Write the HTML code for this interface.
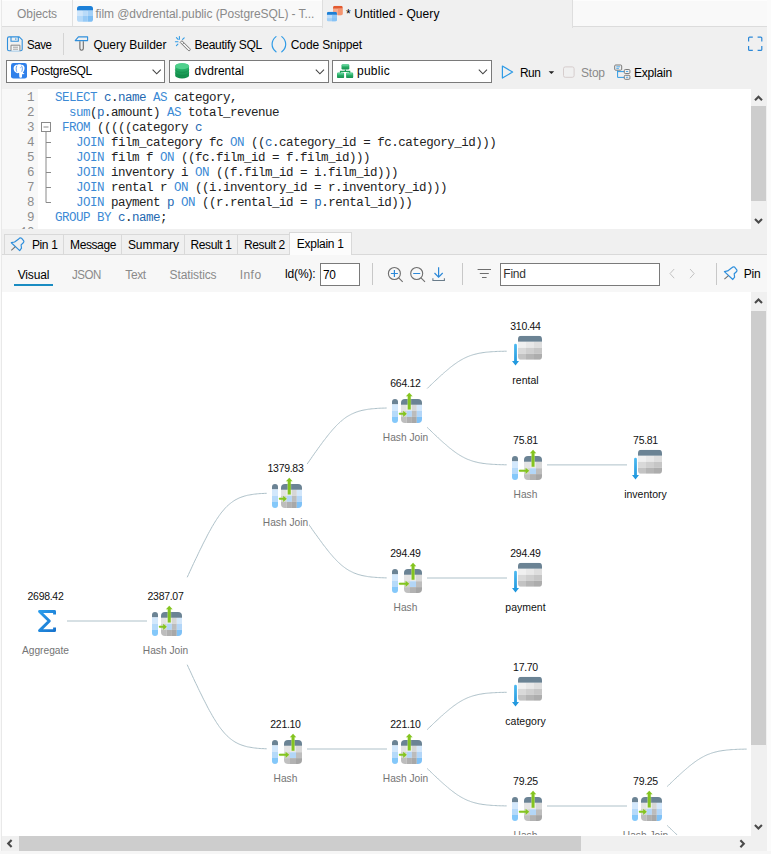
<!DOCTYPE html>
<html><head><meta charset="utf-8"><title>Navicat</title>
<style>
*{box-sizing:border-box;margin:0;padding:0}
html,body{width:771px;height:854px;overflow:hidden;background:#f0f0f0}
body{font-family:"Liberation Sans",sans-serif;font-size:12px;color:#000;position:relative}
.a{position:absolute}
.t{position:absolute;white-space:nowrap;height:16px;line-height:16px;font-size:12px}
.g{color:#8a8a8a}
.sep{position:absolute;width:1px;background:#d4d4d4}
.combo{position:absolute;top:60px;height:23px;background:#fff;border:1px solid #7a7a7a}
svg{position:absolute;overflow:visible}
/* editor */
#ed{left:2px;top:89px;width:749px;height:140px;background:#fff;overflow:hidden}
#gut{left:0;top:0;width:36px;height:140px;background:#f8f8f8}
.ln{position:absolute;left:0;width:32px;text-align:right;font-family:"Liberation Mono",monospace;font-size:12.5px;letter-spacing:-0.5px;color:#8c8c8c;height:15px;line-height:15px}
.cl{position:absolute;left:53px;font-family:"Liberation Mono",monospace;font-size:12.5px;letter-spacing:-0.5px;color:#222;height:15px;line-height:15px;white-space:pre}
.k{color:#3c8ad5}
.i{color:#2569b1}
/* canvas */
#cv{left:2px;top:292px;width:749px;height:544px;background:#fff;overflow:hidden}
#cvc{position:absolute;left:0;top:0;width:749px;height:542.7px;overflow:hidden}
#cvi{position:absolute;left:-2px;top:-292px;width:771px;height:854px}
#edges path{fill:none;stroke:#aec1c9;stroke-width:1}
.num{position:absolute;width:80px;text-align:center;font-size:10.5px;letter-spacing:-0.3px;height:14px;line-height:14px;color:#111}
.lbl{position:absolute;width:80px;text-align:center;font-size:10.2px;height:14px;line-height:14px;color:#747474}
.lbl.tb{color:#111;font-size:10.5px}
.num span,.lbl span{background:#fff;padding:0 1px}
.ic{position:absolute}
.sb{position:absolute;background:#f0f0f0}
.th{position:absolute;background:#cdcdcd}
</style></head><body>
<!-- window edges -->
<div class="a" style="left:0;top:0;width:2px;height:854px;background:#fafafa"></div><div class="a" style="left:1px;top:0;width:1px;height:854px;background:#e9e9e9"></div>
<div class="a" style="left:767px;top:0;width:4px;height:854px;background:#fbfbfb"></div>
<!-- tab bar -->
<div class="a" style="left:2px;top:0;width:765px;height:27px;background:#f9f9f9;border-bottom:1px solid #dcdcdc;border-top:1px solid #fdfdfd"></div>
<div class="a" style="left:322px;top:0;width:251px;height:28px;background:#f0f0f0;border-left:1px solid #dedede;border-right:1px solid #dedede"></div>
<div class="sep" style="left:72px;top:0;height:26px;background:#e0e0e0"></div>
<!--TABICONS-->
<!-- toolbar separators -->
<div class="sep" style="left:63px;top:33px;height:22px"></div>
<!-- combos -->
<div class="combo" style="left:6px;width:159px"></div>
<div class="combo" style="left:169px;width:159.5px"></div>
<div class="combo" style="left:332px;width:159.5px"></div>
<!-- editor -->
<div id="ed" class="a"><div id="gut" class="a"></div>
<div class="ln" style="top:1.9px">1</div><div class="cl" style="top:1.9px"><span class="k">SELECT</span> <span class="i">c</span>.<span class="i">name</span> <span class="k">AS</span> category,</div>
<div class="ln" style="top:16.9px">2</div><div class="cl" style="top:16.9px">  <span class="k">sum</span>(<span class="i">p</span>.amount) <span class="k">AS</span> total_revenue</div>
<div class="ln" style="top:31.9px">3</div><div class="cl" style="top:31.9px"> <span class="k">FROM</span> (((((category <span class="i">c</span></div>
<div class="ln" style="top:46.9px">4</div><div class="cl" style="top:46.9px">   <span class="k">JOIN</span> film_category fc <span class="k">ON</span> ((<span class="i">c</span>.category_id = fc.category_id)))</div>
<div class="ln" style="top:61.9px">5</div><div class="cl" style="top:61.9px">   <span class="k">JOIN</span> film f <span class="k">ON</span> ((fc.film_id = f.film_id)))</div>
<div class="ln" style="top:76.9px">6</div><div class="cl" style="top:76.9px">   <span class="k">JOIN</span> inventory i <span class="k">ON</span> ((f.film_id = i.film_id)))</div>
<div class="ln" style="top:91.9px">7</div><div class="cl" style="top:91.9px">   <span class="k">JOIN</span> rental r <span class="k">ON</span> ((i.inventory_id = r.inventory_id)))</div>
<div class="ln" style="top:106.9px">8</div><div class="cl" style="top:106.9px">   <span class="k">JOIN</span> payment <span class="i">p</span> <span class="k">ON</span> ((r.rental_id = <span class="i">p</span>.rental_id)))</div>
<div class="ln" style="top:121.9px">9</div><div class="cl" style="top:121.9px"><span class="k">GROUP BY</span> <span class="i">c</span>.<span class="i">name</span>;</div>
<div class="ln" style="top:136.9px">10</div><div class="cl" style="top:136.9px"></div><svg width="60" height="140" style="left:0;top:0"><g fill="none" stroke="#8a8a8a" stroke-width="1">
<rect x="39.5" y="33.5" width="9" height="9" fill="#fff"/><path d="M41.5,38h5"/>
<path d="M44,43v70.5h5M44,53.500h5M44,68.500h5M44,83.500h5M44,98.500h5"/></g></svg>
</div>
<!-- editor scrollbar -->
<div class="sb" style="left:751px;top:89px;width:16px;height:140px"></div>
<div class="th" style="left:751px;top:106px;width:15px;height:95px"></div>
<!-- result tabs -->
<div class="a" style="left:2px;top:255px;width:765px;height:37px;background:#f7f7f7"></div>
<div class="a" style="left:2px;top:254px;width:765px;height:1px;background:#d9d9d9"></div>
<div class="a" style="left:4px;top:234px;width:60px;height:21px;border:1px solid #d9d9d9;background:#f0f0f0"></div>
<div class="a" style="left:63px;top:234px;width:59px;height:21px;border:1px solid #d9d9d9;background:#f0f0f0"></div>
<div class="a" style="left:121px;top:234px;width:64px;height:21px;border:1px solid #d9d9d9;background:#f0f0f0"></div>
<div class="a" style="left:184px;top:234px;width:54px;height:21px;border:1px solid #d9d9d9;background:#f0f0f0"></div>
<div class="a" style="left:237px;top:234px;width:53px;height:21px;border:1px solid #d9d9d9;background:#f0f0f0"></div>
<div class="a" style="left:289px;top:232px;width:63px;height:23px;border:1px solid #d9d9d9;border-bottom:none;background:#fcfcfc"></div>
<div class="a" style="left:14px;top:284px;width:39px;height:2px;background:#1a8cc2"></div>
<div class="a" style="left:320px;top:263px;width:40px;height:23px;background:#fff;border:1px solid #7a7a7a"></div>
<div class="a" style="left:500px;top:263px;width:160px;height:23px;background:#fff;border:1px solid #7a7a7a"></div>
<div class="sep" style="left:372px;top:263px;height:22px;background:#c8c8c8"></div>
<div class="sep" style="left:462px;top:263px;height:22px;background:#c8c8c8"></div>
<div class="sep" style="left:716px;top:263px;height:22px;background:#c8c8c8"></div>
<div class="t" style="left:17.1px;top:5.5px;color:#8a8a8a;letter-spacing:-0.11px">Objects</div>
<div class="t" style="left:95.5px;top:5.5px;color:#8a8a8a;letter-spacing:-0.06px">film @dvdrental.public (PostgreSQL) - T...</div>
<div class="t" style="left:346.0px;top:5.5px;color:#000;letter-spacing:0.08px">* Untitled - Query</div>
<div class="t" style="left:26.7px;top:37.0px;color:#000;letter-spacing:-0.45px;transform:scaleX(0.955);transform-origin:0 50%">Save</div>
<div class="t" style="left:93.4px;top:37.0px;color:#000;letter-spacing:-0.02px">Query Builder</div>
<div class="t" style="left:194.5px;top:37.0px;color:#000;letter-spacing:-0.27px">Beautify SQL</div>
<div class="t" style="left:290.8px;top:37.0px;color:#000;letter-spacing:-0.12px">Code Snippet</div>
<div class="t" style="left:30.5px;top:62.9px;color:#000;letter-spacing:-0.41px">PostgreSQL</div>
<div class="t" style="left:194.5px;top:62.9px;color:#000;letter-spacing:0.02px">dvdrental</div>
<div class="t" style="left:357.0px;top:62.9px;color:#000;letter-spacing:0.26px">public</div>
<div class="t" style="left:520.4px;top:65.2px;color:#000;letter-spacing:-0.45px;transform:scaleX(0.987);transform-origin:0 50%">Run</div>
<div class="t" style="left:581.1px;top:65.2px;color:#8a8a8a;letter-spacing:-0.25px">Stop</div>
<div class="t" style="left:634.0px;top:65.2px;color:#000;letter-spacing:-0.21px">Explain</div>
<div class="t" style="left:31.9px;top:237.2px;color:#000;letter-spacing:-0.35px">Pin 1</div>
<div class="t" style="left:70.1px;top:237.2px;color:#000;letter-spacing:-0.41px">Message</div>
<div class="t" style="left:127.9px;top:237.2px;color:#000;letter-spacing:-0.03px">Summary</div>
<div class="t" style="left:190.5px;top:237.2px;color:#000;letter-spacing:-0.37px">Result 1</div>
<div class="t" style="left:244.1px;top:237.2px;color:#000;letter-spacing:-0.42px">Result 2</div>
<div class="t" style="left:296.8px;top:236.0px;color:#000;letter-spacing:-0.28px">Explain 1</div>
<div class="t" style="left:17.7px;top:266.9px;color:#000;letter-spacing:-0.16px">Visual</div>
<div class="t" style="left:72.1px;top:266.9px;color:#8a8a8a;letter-spacing:-0.45px;transform:scaleX(0.960);transform-origin:0 50%">JSON</div>
<div class="t" style="left:125.3px;top:266.9px;color:#8a8a8a;letter-spacing:-0.38px">Text</div>
<div class="t" style="left:169.5px;top:266.9px;color:#8a8a8a;letter-spacing:-0.10px">Statistics</div>
<div class="t" style="left:239.7px;top:266.9px;color:#8a8a8a;letter-spacing:0.45px">Info</div>
<div class="t" style="left:285.1px;top:265.7px;color:#000;letter-spacing:-0.16px">ld(%):</div>
<div class="t" style="left:323.2px;top:266.9px;color:#000;letter-spacing:-0.45px;transform:scaleX(0.987);transform-origin:0 50%">70</div>
<div class="t" style="left:503.3px;top:266.4px;color:#333;letter-spacing:-0.21px">Find</div>
<div class="t" style="left:743.8px;top:265.9px;color:#000;letter-spacing:-0.28px">Pin</div>
<svg id="ci" width="771" height="854" viewBox="0 0 771 854" style="left:0;top:0">
<defs>
<linearGradient id="gcy" x1="0" y1="0" x2="0" y2="1"><stop offset="0" stop-color="#35c278"/><stop offset="1" stop-color="#0f8a47"/></linearGradient>
<linearGradient id="gsc" x1="0" y1="0" x2="0" y2="1"><stop offset="0" stop-color="#3cc47c"/><stop offset="1" stop-color="#16924f"/></linearGradient>
</defs>
<!-- film tab icon -->
<g>
<clipPath id="cf1"><rect x="77" y="5.900" width="16" height="15.900" rx="2.600"/></clipPath>
<g clip-path="url(#cf1)">
<rect x="77" y="6" width="16" height="4.6" fill="#1c80d8"/>
<rect x="77" y="10.6" width="5.4" height="5.4" fill="#cfe6fb"/><rect x="82.4" y="10.6" width="5.3" height="5.4" fill="#b9dbf9"/><rect x="87.7" y="10.6" width="5.3" height="5.4" fill="#a3d0f7"/>
<rect x="77" y="16" width="5.4" height="6" fill="#b4d9f9"/><rect x="82.4" y="16" width="5.3" height="6" fill="#97caf6"/><rect x="87.7" y="16" width="5.3" height="6" fill="#7dbdf3"/>
</g></g>
<!-- query tab icon -->
<g>
<clipPath id="cq1"><rect x="333" y="5.8" width="9.8" height="9.6" rx="1.8"/></clipPath>
<g clip-path="url(#cq1)"><rect x="333" y="5.8" width="9.8" height="3" fill="#e35a2f"/><rect x="333" y="8.8" width="9.8" height="6.6" fill="#f7ab8d"/><rect x="338" y="8.8" width="4.8" height="6.6" fill="#f4946f"/></g>
<clipPath id="cq2"><rect x="326.8" y="11.7" width="10.2" height="9.8" rx="1.8"/></clipPath>
<g clip-path="url(#cq2)"><rect x="326.8" y="11.7" width="10.2" height="3.2" fill="#1c7fd6"/><rect x="326.8" y="14.9" width="10.2" height="6.6" fill="#bfdefa"/><rect x="332" y="14.9" width="5" height="6.6" fill="#8fc6f6"/><rect x="326.8" y="18.2" width="10.2" height="3.3" fill="#7dbdf3" opacity=".45"/></g>
</g>
<!-- save -->
<g fill="none" stroke="#2f8fdc" stroke-width="1.1" stroke-linejoin="round">
<path d="M9,36.9h10.2l3,3v9.4a1.5,1.5 0 0 1 -1.5,1.5h-11.7a1.5,1.5 0 0 1 -1.5,-1.5v-10.9a1.5,1.5 0 0 1 1.5,-1.5z"/>
<path d="M11,36.9v4.3h7.3v-4.3"/>
</g>
<g fill="none" stroke="#7c7c7c" stroke-width=".9">
<path d="M11,50.800v-5.600h8.900v5.600" fill="#f6f6f6"/><path d="M13,47.200h5M13,49.200h5" stroke-width=".7"/>
<path d="M15.8,38.2v1.8" stroke="#2f8fdc"/>
</g>
<!-- query builder -->
<path d="M75.2,40.6l3.2,-3.7h9.2v3.7z" fill="none" stroke="#2f8fdc" stroke-width="1.1" stroke-linejoin="round"/>
<path d="M79.9,41.2v7.3a1.7,1.7 0 0 0 3.4,0v-7.3" fill="none" stroke="#6a6a6a" stroke-width="1.1"/>
<!-- beautify -->
<g stroke="#2f9be6" stroke-width="1.1" stroke-linecap="round" fill="none">
<path d="M179.4,36.6v2.6M175.4,41.7h2.6M176.4,37.7l1.7,1.7M184.2,37.8l-1.6,1.6M177.9,44.1l-1.5,1.5"/>
</g>
<path d="M180.2,42.4l1.7,-1.7l8,8a1.2,1.2 0 0 1 -1.7,1.7z" fill="none" stroke="#777" stroke-width="1"/>
<path d="M182.4,44.4l1.6,-1.6" stroke="#777" stroke-width=".9"/>
<!-- code snippet -->
<path d="M276,36.6c-5.2,4.2 -5.2,11 0,15.2M281.8,36.6c5.2,4.2 5.2,11 0,15.2" fill="none" stroke="#2f9be6" stroke-width="1.2" stroke-linecap="round"/>
<!-- fullscreen -->
<path d="M748.6,41.5v-3.4a1,1 0 0 1 1,-1h3.2M757.6,37.1h3.2a1,1 0 0 1 1,1v3.4M761.8,46v3.4a1,1 0 0 1 -1,1h-3.2M752.8,50.4h-3.2a1,1 0 0 1 -1,-1v-3.4" fill="none" stroke="#2b88d8" stroke-width="1.2"/>
<!-- pg icon -->
<rect x="11" y="63" width="16" height="15.600" rx="2.400" fill="#2f80ea"/>
<path d="M13.700,69.300c-.5,-3.200 1.700,-4.900 4,-4.600c1.100,-.5 2.400,-.5 3.500,0c2.300,-.2 3.800,1.700 3.300,4.300c-.2,1.300 -.8,2.600 -1.600,3.500c.2,.7 .8,.9 1.500,.7c-.3,.9 -1.500,1.300 -2.300,.8l-.1,2.700c-.1,1.500 -2.600,1.500 -2.700,0l-.2,-3.900c-1,.7 -2.500,.6 -3.100,-.3c-1.200,-.5 -2.100,-1.700 -2.300,-3.200z" fill="#fff"/>
<path d="M16.900,65.700c-1,1.700 -.9,4.300 -.1,6M21.400,65.700c1.100,1.500 1.300,3.900 .3,6" fill="none" stroke="#2f80ea" stroke-width=".75"/>
<circle cx="20.300" cy="67.800" r=".45" fill="#2f80ea"/>
<!-- cylinder -->
<path d="M175.2,66.200a6.900,3 0 0 1 13.800,0v9.300a6.900,3 0 0 1 -13.800,0z" fill="url(#gcy)"/>
<ellipse cx="182.1" cy="66.200" rx="6.900" ry="3" fill="#4fd08c"/>
<path d="M175.2,69.400a6.900,3 0 0 0 13.800,0M175.2,72.500a6.900,3 0 0 0 13.800,0" fill="none" stroke="#0d7d40" stroke-width=".7" opacity=".55"/>
<!-- schema -->
<g fill="url(#gsc)">
<rect x="341.500" y="64.3" width="7.800" height="5.200" rx="1.200"/>
<rect x="337" y="72.600" width="7.100" height="5.500" rx="1.200"/>
<rect x="346.100" y="72.600" width="7.100" height="5.500" rx="1.200"/>
</g>
<g fill="#63d49c" opacity=".8"><rect x="342.100" y="64.700" width="6.600" height="1.500" rx=".6"/><rect x="337.600" y="73" width="5.900" height="1.500" rx=".6"/><rect x="346.700" y="73" width="5.900" height="1.500" rx=".6"/></g>
<path d="M345.400,69.500v1.800M340.500,72.800v-1.500h9.200v1.500" fill="none" stroke="#1e9e58" stroke-width="1.200"/>
<!-- combo chevrons -->
<g fill="none" stroke="#444" stroke-width="1.100">
<path d="M152.600,69.700l4.100,4.100l4.100,-4.100"/>
<path d="M315.800,69.700l4.100,4.100l4.100,-4.100"/>
<path d="M478.800,69.700l4.100,4.100l4.100,-4.100"/>
</g>
<!-- run -->
<path d="M502.400,66.100v12l10.200,-6z" fill="none" stroke="#2f9be6" stroke-width="1.200" stroke-linejoin="round"/>
<path d="M548.600,71.200h5.600l-2.800,2.900z" fill="#222"/>
<!-- stop -->
<rect x="563.500" y="66.900" width="10.600" height="10.400" rx="1.800" fill="none" stroke="#d6cdcd" stroke-width="1"/>
<!-- explain -->
<rect x="614.700" y="65" width="7" height="5.200" rx="1" fill="none" stroke="#7a7a7a" stroke-width="1"/>
<path d="M616.300,66.800h3.800M616.300,68.400h2.600" stroke="#2f9be6" stroke-width=".8"/>
<path d="M617.600,70.400v7h6.400M617.600,71.600h6.400" fill="none" stroke="#2f9be6" stroke-width="1"/>
<rect x="624.300" y="69.500" width="5.600" height="4" rx="1" fill="none" stroke="#7a7a7a" stroke-width="1"/>
<rect x="624.300" y="75.300" width="5.600" height="4" rx="1" fill="none" stroke="#7a7a7a" stroke-width="1"/>
<path d="M626,71.500h2.200M626,77.300h2.200" stroke="#2f9be6" stroke-width=".8"/>
<!-- pin icons -->
<g><path d="M731.800,267.800q1.400,-1.500 2.800,-.7l2.200,2.700q.6,1 -.4,1.900l-2.200,2.100l.4,3.300l-1.800,2.400l-8.400,-7.900l3.300,-.7z" fill="none" stroke="#2f8fdc" stroke-width="1.200" stroke-linejoin="round"/>
<path d="M728.400,275.600l-4,3.600" stroke="#707070" stroke-width="1.100"/></g>
<g transform="translate(-713.100,-28.900)"><path d="M731.800,267.800q1.400,-1.500 2.800,-.7l2.200,2.700q.6,1 -.4,1.900l-2.200,2.100l.4,3.300l-1.800,2.400l-8.400,-7.900l3.300,-.7z" fill="none" stroke="#2f8fdc" stroke-width="1.200" stroke-linejoin="round"/>
<path d="M728.400,275.600l-4,3.600" stroke="#707070" stroke-width="1.100"/></g>
<!-- zoom icons -->
<g fill="none" stroke="#6e6e6e" stroke-width="1.1">
<circle cx="394.4" cy="273.5" r="6"/><path d="M398.700,277.900l4,3.900"/>
<circle cx="416.700" cy="273.500" r="6"/><path d="M421,277.900l4,3.900"/>
</g>
<path d="M390.900,273.500h7M394.400,270v7M413.200,273.500h7" stroke="#2b88d8" stroke-width="1.200"/>
<path d="M438.600,267.300v9.600M434.500,273l4.100,4.100l4.100,-4.100" fill="none" stroke="#2b88d8" stroke-width="1.200"/>
<path d="M432.900,278.300v2.200h11.500v-2.200" fill="none" stroke="#6a7c8a" stroke-width="1.100"/>
<!-- filter -->
<path d="M477.600,269.500h13.400M479.800,273.500h9M482,277.500h4.600" stroke="#6e6e6e" stroke-width="1"/>
<!-- nav arrows -->
<path d="M674.200,269l-4.200,4.600l4.200,4.600M690,269l4.200,4.600l-4.200,4.600" fill="none" stroke="#c2c2c2" stroke-width="1"/>
</svg>

<!-- canvas -->
<div id="cv" class="a"><div id="cvc"><div id="cvi">
<svg id="edges" width="771" height="854" style="left:0;top:0">
<path d="M67.0,621.0L147.0,621.0"/>
<path d="M187.2,577.3L188.5,574.5L189.8,571.6L191.1,568.9L192.3,566.2L193.5,563.6L194.7,561.1L195.9,558.6L197.1,556.2L198.2,553.8L199.3,551.5L200.4,549.2L201.5,547.1L202.5,544.9L203.5,542.9L204.6,540.8L205.6,538.9L206.6,537.0L207.5,535.1L208.5,533.3L209.4,531.6L210.4,529.9L211.3,528.2L212.2,526.6L213.1,525.1L214.0,523.6L214.9,522.1L215.8,520.7L216.6,519.4L217.5,518.1L218.4,516.8L219.2,515.6L220.1,514.4L220.9,513.2L221.8,512.1L222.7,511.1L223.5,510.1L224.4,509.1L225.2,508.1L226.1,507.2L226.9,506.4L227.8,505.5L228.7,504.8L229.6,504.0L230.5,503.3L231.4,502.6L232.3,501.9L233.2,501.3L234.1,500.7L235.0,500.1L236.0,499.6L236.9,499.1L237.9,498.6L238.9,498.1L239.9,497.7L240.9,497.3L242.0,496.9L243.0,496.6L244.1,496.2L245.2,495.9L246.3,495.6L247.4,495.3L248.6,495.1L249.8,494.9L251.0,494.7L252.2,494.5L253.4,494.3L254.7,494.1L256.0,494.0L257.4,493.8L258.7,493.7L260.1,493.6L261.5,493.5L263.0,493.5L264.5,493.4L266.0,493.3L266.7,493.3"/>
<path d="M187.2,664.7L188.5,667.6L189.8,670.4L191.1,673.1L192.3,675.8L193.5,678.4L194.7,681.0L195.9,683.5L197.1,685.9L198.2,688.3L199.3,690.6L200.4,692.8L201.5,695.0L202.5,697.1L203.5,699.2L204.6,701.2L205.6,703.2L206.6,705.1L207.5,707.0L208.5,708.8L209.4,710.5L210.4,712.2L211.3,713.8L212.2,715.4L213.1,717.0L214.0,718.5L214.9,719.9L215.8,721.4L216.6,722.7L217.5,724.0L218.4,725.3L219.2,726.5L220.1,727.7L220.9,728.8L221.8,729.9L222.7,731.0L223.5,732.0L224.4,733.0L225.2,733.9L226.1,734.8L226.9,735.7L227.8,736.5L228.7,737.3L229.6,738.1L230.5,738.8L231.4,739.5L232.3,740.2L233.2,740.8L234.1,741.4L235.0,742.0L236.0,742.5L236.9,743.0L237.9,743.5L238.9,744.0L239.9,744.4L240.9,744.8L242.0,745.2L243.0,745.5L244.1,745.9L245.2,746.2L246.3,746.5L247.4,746.8L248.6,747.0L249.8,747.2L251.0,747.4L252.2,747.6L253.4,747.8L254.7,748.0L256.0,748.1L257.4,748.3L258.7,748.4L260.1,748.5L261.5,748.6L263.0,748.6L264.5,748.7L266.0,748.8L266.7,748.8"/>
<path d="M307.2,464.0L308.5,462.1L309.8,460.2L311.1,458.4L312.3,456.6L313.5,454.9L314.7,453.2L315.9,451.5L317.1,449.9L318.2,448.3L319.3,446.8L320.4,445.3L321.5,443.8L322.5,442.4L323.5,441.0L324.6,439.7L325.6,438.4L326.6,437.1L327.5,435.9L328.5,434.7L329.4,433.5L330.4,432.4L331.3,431.3L332.2,430.2L333.1,429.2L334.0,428.2L334.9,427.2L335.8,426.3L336.6,425.4L337.5,424.5L338.4,423.7L339.2,422.9L340.1,422.1L340.9,421.3L341.8,420.6L342.7,419.9L343.5,419.2L344.4,418.5L345.2,417.9L346.1,417.3L346.9,416.7L347.8,416.2L348.7,415.7L349.6,415.2L350.5,414.7L351.4,414.2L352.3,413.8L353.2,413.4L354.1,413.0L355.0,412.6L356.0,412.2L356.9,411.9L357.9,411.6L358.9,411.2L359.9,411.0L360.9,410.7L362.0,410.4L363.0,410.2L364.1,410.0L365.2,409.8L366.3,409.6L367.4,409.4L368.6,409.2L369.8,409.1L371.0,408.9L372.2,408.8L373.4,408.7L374.7,408.6L376.0,408.5L377.4,408.4L378.7,408.3L380.1,408.2L381.5,408.2L383.0,408.1L384.5,408.1L386.0,408.0L386.7,408.0"/>
<path d="M307.2,522.1L308.5,524.0L309.8,525.9L311.1,527.7L312.3,529.5L313.5,531.2L314.7,532.9L315.9,534.5L317.1,536.1L318.2,537.7L319.3,539.2L320.4,540.7L321.5,542.2L322.5,543.6L323.5,545.0L324.6,546.3L325.6,547.6L326.6,548.9L327.5,550.1L328.5,551.3L329.4,552.5L330.4,553.6L331.3,554.7L332.2,555.7L333.1,556.8L334.0,557.8L334.9,558.7L335.8,559.7L336.6,560.6L337.5,561.4L338.4,562.3L339.2,563.1L340.1,563.9L340.9,564.6L341.8,565.4L342.7,566.1L343.5,566.7L344.4,567.4L345.2,568.0L346.1,568.6L346.9,569.2L347.8,569.7L348.7,570.3L349.6,570.8L350.5,571.2L351.4,571.7L352.3,572.1L353.2,572.6L354.1,573.0L355.0,573.3L356.0,573.7L356.9,574.0L357.9,574.4L358.9,574.7L359.9,574.9L360.9,575.2L362.0,575.5L363.0,575.7L364.1,575.9L365.2,576.1L366.3,576.3L367.4,576.5L368.6,576.7L369.8,576.8L371.0,577.0L372.2,577.1L373.4,577.2L374.7,577.3L376.0,577.4L377.4,577.5L378.7,577.6L380.1,577.7L381.5,577.7L383.0,577.8L384.5,577.8L386.0,577.9L386.7,577.9"/>
<path d="M427.2,388.5L428.5,387.2L429.8,386.0L431.1,384.8L432.3,383.6L433.5,382.4L434.7,381.3L435.9,380.2L437.1,379.1L438.2,378.1L439.3,377.0L440.4,376.0L441.5,375.1L442.5,374.1L443.5,373.2L444.6,372.3L445.6,371.4L446.6,370.6L447.5,369.8L448.5,369.0L449.4,368.2L450.4,367.4L451.3,366.7L452.2,366.0L453.1,365.3L454.0,364.6L454.9,364.0L455.8,363.4L456.6,362.8L457.5,362.2L458.4,361.6L459.2,361.1L460.1,360.6L460.9,360.0L461.8,359.6L462.7,359.1L463.5,358.6L464.4,358.2L465.2,357.8L466.1,357.4L466.9,357.0L467.8,356.6L468.7,356.3L469.6,355.9L470.5,355.6L471.4,355.3L472.3,355.0L473.2,354.7L474.1,354.5L475.0,354.2L476.0,354.0L476.9,353.8L477.9,353.5L478.9,353.3L479.9,353.1L480.9,353.0L482.0,352.8L483.0,352.6L484.1,352.5L485.2,352.3L486.3,352.2L487.4,352.1L488.6,352.0L489.8,351.9L491.0,351.8L492.2,351.7L493.4,351.6L494.7,351.6L496.0,351.5L497.4,351.4L498.7,351.4L500.1,351.3L501.5,351.3L503.0,351.3L504.5,351.2L506.0,351.2L506.7,351.2"/>
<path d="M427.2,427.4L428.5,428.6L429.8,429.9L431.1,431.1L432.3,432.3L433.5,433.5L434.7,434.6L435.9,435.7L437.1,436.8L438.2,437.9L439.3,438.9L440.4,439.9L441.5,440.9L442.5,441.8L443.5,442.7L444.6,443.6L445.6,444.5L446.6,445.3L447.5,446.2L448.5,447.0L449.4,447.8L450.4,448.5L451.3,449.2L452.2,450.0L453.1,450.6L454.0,451.3L454.9,452.0L455.8,452.6L456.6,453.2L457.5,453.8L458.4,454.3L459.2,454.9L460.1,455.4L460.9,455.9L461.8,456.4L462.7,456.9L463.5,457.3L464.4,457.8L465.2,458.2L466.1,458.6L466.9,459.0L467.8,459.4L468.7,459.7L469.6,460.0L470.5,460.4L471.4,460.7L472.3,461.0L473.2,461.3L474.1,461.5L475.0,461.8L476.0,462.0L476.9,462.2L477.9,462.5L478.9,462.7L479.9,462.9L480.9,463.0L482.0,463.2L483.0,463.4L484.1,463.5L485.2,463.6L486.3,463.8L487.4,463.9L488.6,464.0L489.8,464.1L491.0,464.2L492.2,464.3L493.4,464.4L494.7,464.4L496.0,464.5L497.4,464.6L498.7,464.6L500.1,464.7L501.5,464.7L503.0,464.7L504.5,464.8L506.0,464.8L506.7,464.8"/>
<path d="M547.0,464.9L627.0,464.9"/>
<path d="M427.0,578.0L507.0,578.0"/>
<path d="M307.0,749.0L387.0,749.0"/>
<path d="M427.2,729.6L428.5,728.3L429.8,727.1L431.1,725.9L432.3,724.7L433.5,723.5L434.7,722.4L435.9,721.3L437.1,720.2L438.2,719.2L439.3,718.1L440.4,717.1L441.5,716.2L442.5,715.2L443.5,714.3L444.6,713.4L445.6,712.5L446.6,711.7L447.5,710.9L448.5,710.1L449.4,709.3L450.4,708.5L451.3,707.8L452.2,707.1L453.1,706.4L454.0,705.7L454.9,705.1L455.8,704.5L456.6,703.9L457.5,703.3L458.4,702.7L459.2,702.2L460.1,701.7L460.9,701.1L461.8,700.7L462.7,700.2L463.5,699.7L464.4,699.3L465.2,698.9L466.1,698.5L466.9,698.1L467.8,697.7L468.7,697.4L469.6,697.0L470.5,696.7L471.4,696.4L472.3,696.1L473.2,695.8L474.1,695.6L475.0,695.3L476.0,695.1L476.9,694.9L477.9,694.6L478.9,694.4L479.9,694.2L480.9,694.1L482.0,693.9L483.0,693.7L484.1,693.6L485.2,693.4L486.3,693.3L487.4,693.2L488.6,693.1L489.8,693.0L491.0,692.9L492.2,692.8L493.4,692.7L494.7,692.7L496.0,692.6L497.4,692.5L498.7,692.5L500.1,692.4L501.5,692.4L503.0,692.4L504.5,692.3L506.0,692.3L506.7,692.3"/>
<path d="M427.2,768.5L428.5,769.7L429.8,771.0L431.1,772.2L432.3,773.4L433.5,774.6L434.7,775.7L435.9,776.8L437.1,777.9L438.2,779.0L439.3,780.0L440.4,781.0L441.5,782.0L442.5,782.9L443.5,783.8L444.6,784.7L445.6,785.6L446.6,786.4L447.5,787.3L448.5,788.1L449.4,788.9L450.4,789.6L451.3,790.3L452.2,791.1L453.1,791.7L454.0,792.4L454.9,793.1L455.8,793.7L456.6,794.3L457.5,794.9L458.4,795.4L459.2,796.0L460.1,796.5L460.9,797.0L461.8,797.5L462.7,798.0L463.5,798.4L464.4,798.9L465.2,799.3L466.1,799.7L466.9,800.1L467.8,800.5L468.7,800.8L469.6,801.1L470.5,801.5L471.4,801.8L472.3,802.1L473.2,802.4L474.1,802.6L475.0,802.9L476.0,803.1L476.9,803.3L477.9,803.6L478.9,803.8L479.9,804.0L480.9,804.1L482.0,804.3L483.0,804.5L484.1,804.6L485.2,804.7L486.3,804.9L487.4,805.0L488.6,805.1L489.8,805.2L491.0,805.3L492.2,805.4L493.4,805.5L494.7,805.5L496.0,805.6L497.4,805.7L498.7,805.7L500.1,805.8L501.5,805.8L503.0,805.8L504.5,805.9L506.0,805.9L506.7,805.9"/>
<path d="M547.0,806.0L627.0,806.0"/>
<path d="M667.2,786.5L668.5,785.3L669.8,784.0L671.1,782.8L672.3,781.6L673.5,780.4L674.7,779.3L675.9,778.2L677.1,777.1L678.2,776.0L679.3,775.0L680.4,774.0L681.5,773.0L682.5,772.1L683.5,771.2L684.6,770.3L685.6,769.4L686.6,768.6L687.5,767.7L688.5,766.9L689.4,766.1L690.4,765.4L691.3,764.7L692.2,763.9L693.1,763.3L694.0,762.6L694.9,761.9L695.8,761.3L696.6,760.7L697.5,760.1L698.4,759.6L699.2,759.0L700.1,758.5L700.9,758.0L701.8,757.5L702.7,757.0L703.5,756.6L704.4,756.1L705.2,755.7L706.1,755.3L706.9,754.9L707.8,754.5L708.7,754.2L709.6,753.9L710.5,753.5L711.4,753.2L712.3,752.9L713.2,752.6L714.1,752.4L715.0,752.1L716.0,751.9L716.9,751.7L717.9,751.4L718.9,751.2L719.9,751.0L720.9,750.9L722.0,750.7L723.0,750.5L724.1,750.4L725.2,750.3L726.3,750.1L727.4,750.0L728.6,749.9L729.8,749.8L731.0,749.7L732.2,749.6L733.4,749.5L734.7,749.5L736.0,749.4L737.4,749.3L738.7,749.3L740.1,749.2L741.5,749.2L743.0,749.2L744.5,749.1L746.0,749.1L746.7,749.1"/>
<path d="M667.2,825.4L668.5,826.7L669.8,828.0L671.1,829.2L672.3,830.4L673.5,831.5L674.7,832.7L675.9,833.8L677.1,834.8L678.2,835.9L679.3,836.9L680.4,837.9L681.5,838.9L682.5,839.8L683.5,840.8L684.6,841.7L685.6,842.5L686.6,843.4L687.5,844.2L688.5,845.0L689.4,845.8L690.4,846.5L691.3,847.3L692.2,848.0L693.1,848.7L694.0,849.3L694.9,850.0L695.8,850.6L696.6,851.2L697.5,851.8L698.4,852.4L699.2,852.9L700.1,853.4L700.9,853.9L701.8,854.4L702.7,854.9L703.5,855.4L704.4,855.8L705.2,856.2L706.1,856.6L706.9,857.0L707.8,857.4L708.7,857.7L709.6,858.1L710.5,858.4L711.4,858.7L712.3,859.0L713.2,859.3L714.1,859.5L715.0,859.8L716.0,860.0L716.9,860.2L717.9,860.5L718.9,860.7L719.9,860.9L720.9,861.0L722.0,861.2L723.0,861.4L724.1,861.5L725.2,861.7L726.3,861.8L727.4,861.9L728.6,862.0L729.8,862.1L731.0,862.2L732.2,862.3L733.4,862.4L734.7,862.4L736.0,862.5L737.4,862.6L738.7,862.6L740.1,862.7L741.5,862.7L743.0,862.7L744.5,862.8L746.0,862.8L746.7,862.8"/>
</svg>
<svg width="0" height="0" style="left:0;top:0"><defs>
<linearGradient id="gb" x1="0" y1="0" x2="0" y2="1"><stop offset="0" stop-color="#4db9f0"/><stop offset="1" stop-color="#1b94dc"/></linearGradient>
<linearGradient id="gs" x1="0" y1="0" x2="1" y2="1"><stop offset="0" stop-color="#2a9cec"/><stop offset="1" stop-color="#1874cd"/></linearGradient>
<clipPath id="cpT"><rect x="-9" y="-15.2" width="24" height="24" rx="3.4"/></clipPath>
<clipPath id="cpH"><rect x="-6" y="-9" width="21" height="24" rx="4"/></clipPath>
<clipPath id="cpH3"><rect x="-3" y="-9" width="18" height="24" rx="4"/></clipPath>
<clipPath id="cpP"><rect x="-15" y="-9" width="6" height="24" rx="3"/></clipPath>
<g id="pill" clip-path="url(#cpP)">
  <rect x="-15" y="-9" width="6" height="5.4" fill="#6b8394"/>
  <rect x="-15" y="-3.6" width="6" height="6.6" fill="#d3e8fc"/>
  <rect x="-15" y="3" width="6" height="6" fill="#b5dafa"/>
  <rect x="-15" y="9" width="6" height="6" fill="#84c8fa"/>
</g>
<g id="i-tbl">
 <g clip-path="url(#cpT)">
  <rect x="-9" y="-15.2" width="24" height="6" fill="#6b8394"/>
  <rect x="-9" y="-9.2" width="8" height="6" fill="#f0f0f0"/><rect x="-1" y="-9.2" width="8" height="6" fill="#e8e8e8"/><rect x="7" y="-9.2" width="8" height="6" fill="#dedede"/>
  <rect x="-9" y="-3.2" width="8" height="6" fill="#d9d9d9"/><rect x="-1" y="-3.2" width="8" height="6" fill="#cfcfcf"/><rect x="7" y="-3.2" width="8" height="6" fill="#c6c6c6"/>
  <rect x="-9" y="2.8" width="8" height="6" fill="#c3c3c3"/><rect x="-1" y="2.8" width="8" height="6" fill="#b5b5b5"/><rect x="7" y="2.8" width="8" height="6" fill="#adadad"/>
 </g>
 <path d="M-12.9,-5.8a1.4,1.4 0 0 1 2.8,0V10h2.1l-3.500,4.500l-3.500,-4.500h2.100z" fill="url(#gb)"/>
</g>
<g id="i-hj">
 <use href="#pill"/>
 <g clip-path="url(#cpH)">
  <rect x="-6" y="-9" width="21" height="5.850" fill="#6b8394"/>
  <rect x="-6" y="-3.150" width="5.750" height="5.850" fill="#e3e3e3"/><rect x="-0.250" y="-3.150" width="5.150" height="5.850" fill="#e9e9e9"/><rect x="4.900" y="-3.150" width="4.900" height="5.850" fill="#d6d6d6"/><rect x="9.800" y="-3.150" width="5.200" height="5.850" fill="#d3e7fb"/>
  <rect x="-6" y="2.700" width="5.750" height="6.150" fill="#cfcfcf"/><rect x="-0.250" y="2.700" width="5.150" height="6.150" fill="#b3d6f8"/><rect x="4.900" y="2.700" width="4.900" height="6.150" fill="#bcbcbc"/><rect x="9.800" y="2.700" width="5.200" height="6.150" fill="#b3d6f8"/>
  <rect x="-6" y="8.850" width="5.750" height="6.150" fill="#bdbdbd"/><rect x="-0.250" y="8.850" width="5.150" height="6.150" fill="#b0b0b0"/><rect x="4.900" y="8.850" width="4.900" height="6.150" fill="#a8a8a8"/><rect x="9.800" y="8.850" width="5.200" height="6.150" fill="#7fc1f6"/>
 </g>
 <path d="M0.750,1.400V-11.700h-1.750l3.250,-3.500l3.250,3.500h-1.750V1.400z" fill="#84c420" stroke="#e6f4c6" stroke-width=".5" paint-order="stroke"/>
 <path d="M-7.200,4.800h3.400v-2.100l3.650,3.100l-3.650,3.100v-2.100h-3.400a1,1 0 0 1 0,-2z" fill="#84c420" stroke="#e6f4c6" stroke-width=".5" paint-order="stroke"/>
</g>
<g id="i-h">
 <use href="#pill"/>
 <g clip-path="url(#cpH3)">
  <rect x="-3" y="-9" width="18" height="5.850" fill="#6b8394"/>
  <rect x="-3" y="-3.150" width="6" height="6.350" fill="#e4e4e4"/><rect x="3" y="-3.150" width="6" height="6.350" fill="#e9e9e9"/><rect x="9" y="-3.150" width="6" height="6.350" fill="#d8d8d8"/>
  <rect x="-3" y="3.200" width="6" height="5.900" fill="#d0d0d0"/><rect x="3" y="3.200" width="6" height="5.900" fill="#b3d6f7"/><rect x="9" y="3.200" width="6" height="5.900" fill="#bdbdbd"/>
  <rect x="-3" y="9.100" width="6" height="5.900" fill="#c0c0c0"/><rect x="3" y="9.100" width="6" height="5.900" fill="#b2b2b2"/><rect x="9" y="9.100" width="6" height="5.900" fill="#a6a6a6"/>
 </g>
 <path d="M4.600,1.800V-11.800h-1.650l3.100,-3.400l3.100,3.400h-1.650V1.800z" fill="#84c420" stroke="#e6f4c6" stroke-width=".5" paint-order="stroke"/>
 <path d="M-7.200,4.800h5.800v-2.100l3.650,3.100l-3.650,3.100v-2.100h-5.800a1,1 0 0 1 0,-2z" fill="#84c420" stroke="#e6f4c6" stroke-width=".5" paint-order="stroke"/>
</g>
<g id="i-agg">
 <path d="M7.55,-6.5V-9.55H-7.45L2.3,0.05L-7.45,9.65H7.55V6.6" fill="none" stroke="url(#gs)" stroke-width="2.9" stroke-linejoin="round" stroke-linecap="butt"/>
</g>
</defs></svg>
<div class="num" style="left:5.5px;top:589px"><span>2698.42</span></div><div class="lbl" style="left:5.5px;top:644px"><span>Aggregate</span></div><svg class="ic" style="left:27.0px;top:601.0px" width="40" height="40" viewBox="-20 -20 40 40"><use href="#i-agg"/></svg>
<div class="num" style="left:125.5px;top:589px"><span>2387.07</span></div><div class="lbl" style="left:125.5px;top:644px"><span>Hash Join</span></div><svg class="ic" style="left:147.0px;top:601.0px" width="40" height="40" viewBox="-20 -20 40 40"><use href="#i-hj"/></svg>
<div class="num" style="left:245.5px;top:461px"><span>1379.83</span></div><div class="lbl" style="left:245.5px;top:516px"><span>Hash Join</span></div><svg class="ic" style="left:267.0px;top:473.1px" width="40" height="40" viewBox="-20 -20 40 40"><use href="#i-hj"/></svg>
<div class="num" style="left:245.5px;top:717px"><span>221.10</span></div><div class="lbl" style="left:245.5px;top:772px"><span>Hash</span></div><svg class="ic" style="left:267.0px;top:729.0px" width="40" height="40" viewBox="-20 -20 40 40"><use href="#i-h"/></svg>
<div class="num" style="left:365.5px;top:376px"><span>664.12</span></div><div class="lbl" style="left:365.5px;top:431px"><span>Hash Join</span></div><svg class="ic" style="left:387.0px;top:387.9px" width="40" height="40" viewBox="-20 -20 40 40"><use href="#i-hj"/></svg>
<div class="num" style="left:365.5px;top:546px"><span>294.49</span></div><div class="lbl" style="left:365.5px;top:601px"><span>Hash</span></div><svg class="ic" style="left:387.0px;top:558.0px" width="40" height="40" viewBox="-20 -20 40 40"><use href="#i-h"/></svg>
<div class="num" style="left:365.5px;top:717px"><span>221.10</span></div><div class="lbl" style="left:365.5px;top:772px"><span>Hash Join</span></div><svg class="ic" style="left:387.0px;top:729.0px" width="40" height="40" viewBox="-20 -20 40 40"><use href="#i-hj"/></svg>
<div class="num" style="left:485.5px;top:319px"><span>310.44</span></div><div class="lbl tb" style="left:485.5px;top:373px"><span>rental</span></div><svg class="ic" style="left:507.0px;top:331.1px" width="40" height="40" viewBox="-20 -20 40 40"><use href="#i-tbl"/></svg>
<div class="num" style="left:485.5px;top:433px"><span>75.81</span></div><div class="lbl" style="left:485.5px;top:488px"><span>Hash</span></div><svg class="ic" style="left:507.0px;top:444.9px" width="40" height="40" viewBox="-20 -20 40 40"><use href="#i-h"/></svg>
<div class="num" style="left:485.5px;top:546px"><span>294.49</span></div><div class="lbl tb" style="left:485.5px;top:600px"><span>payment</span></div><svg class="ic" style="left:507.0px;top:558.0px" width="40" height="40" viewBox="-20 -20 40 40"><use href="#i-tbl"/></svg>
<div class="num" style="left:485.5px;top:660px"><span>17.70</span></div><div class="lbl tb" style="left:485.5px;top:714px"><span>category</span></div><svg class="ic" style="left:507.0px;top:672.2px" width="40" height="40" viewBox="-20 -20 40 40"><use href="#i-tbl"/></svg>
<div class="num" style="left:485.5px;top:774px"><span>79.25</span></div><div class="lbl" style="left:485.5px;top:829px"><span>Hash</span></div><svg class="ic" style="left:507.0px;top:786.0px" width="40" height="40" viewBox="-20 -20 40 40"><use href="#i-h"/></svg>
<div class="num" style="left:605.5px;top:433px"><span>75.81</span></div><div class="lbl tb" style="left:605.5px;top:487px"><span>inventory</span></div><svg class="ic" style="left:627.0px;top:444.9px" width="40" height="40" viewBox="-20 -20 40 40"><use href="#i-tbl"/></svg>
<div class="num" style="left:605.5px;top:774px"><span>79.25</span></div><div class="lbl" style="left:605.5px;top:829px"><span>Hash Join</span></div><svg class="ic" style="left:627.0px;top:786.0px" width="40" height="40" viewBox="-20 -20 40 40"><use href="#i-hj"/></svg>


</div></div></div>
<!-- canvas scrollbars -->
<div class="sb" style="left:751px;top:292px;width:16px;height:544px"></div>
<div class="th" style="left:751px;top:311px;width:15px;height:433.6px"></div>
<div class="sb" style="left:2px;top:836px;width:765px;height:18px"></div>
<div class="th" style="left:19px;top:836px;width:562px;height:14.8px"></div>
<div class="a" style="left:0;top:851px;width:771px;height:3px;background:#f6f6f6"></div>
<svg width="771" height="854" style="left:0;top:0"><g fill="none" stroke="#4a4a4a" stroke-width="2.1"><path d="M755.0,100.19999999999999L758.5,96.8L762.0,100.19999999999999"/><path d="M755.0,219.1L758.5,222.5L762.0,219.1"/><path d="M755.0,302.90000000000003L758.5,299.5L762.0,302.90000000000003"/><path d="M754.9,825.1L758.4,828.5L761.9,825.1"/><path d="M11.6,840.0L8.2,843.5L11.6,847.0"/><path d="M740.4,840.2L743.8,843.7L740.4,847.2"/></g></svg>
</body></html>
